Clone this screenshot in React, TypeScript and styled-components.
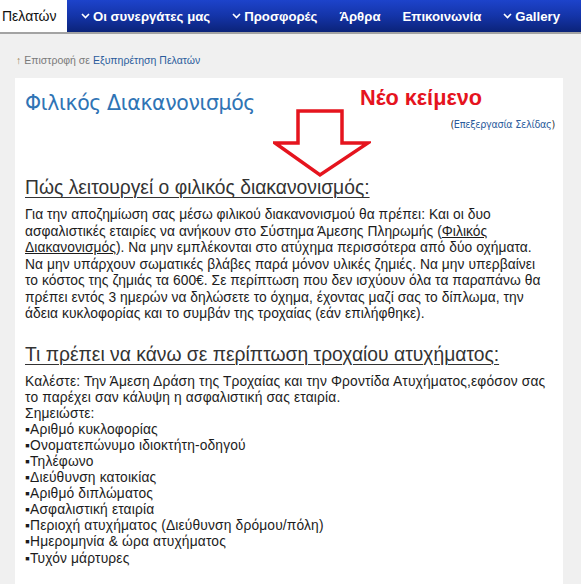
import styled, { createGlobalStyle } from 'styled-components';

const GlobalStyle = createGlobalStyle`
  html, body {
    margin: 0;
    padding: 0;
    background: #f0f0f0;
    font-family: 'Liberation Sans', Arial, sans-serif;
  }
`;

const Page = styled.div`
  width: 581px;
  height: 584px;
  overflow: hidden;
  background: #f0f0f0;
`;

const Nav = styled.nav`
  display: flex;
  align-items: stretch;
  height: 32px;
  background: linear-gradient(to bottom, #1d43cb 0%, #1434a8 50%, #0b2379 100%);
  border-bottom: 2px solid #a3a3a3;
`;

const ActiveTab = styled.div`
  display: flex;
  align-items: center;
  width: 67px;
  padding-left: 2px;
  box-sizing: border-box;
  background: #fff;
  color: #111;
  font-size: 14px;
  white-space: nowrap;
  overflow: hidden;
`;

const Menu = styled.ul`
  display: flex;
  align-items: center;
  gap: 22px;
  margin: 0;
  padding: 0 0 0 14px;
  list-style: none;
`;

const MenuItem = styled.li`
  display: flex;
  align-items: center;
  gap: 3px;
  color: #fff;
  font-size: 13.2px;
  font-weight: bold;
  white-space: nowrap;
`;

const Chevron = () => (
  <svg width="9" height="6" viewBox="0 0 9 6">
    <path d="M1 1 L4.5 4.5 L8 1" fill="none" stroke="#fff" strokeWidth="1.6" />
  </svg>
);

const Main = styled.main`
  padding: 19px 18px 0 15px;
`;

const Breadcrumb = styled.div`
  height: 14px;
  line-height: 14px;
  font-size: 10.5px;
  color: #7a7a7a;
  padding-left: 1px;
`;

const Arrow = styled.span`
  color: #a08a5a;
  margin-right: 3px;
`;

const Link = styled.a`
  color: #2b5c9c;
  text-decoration: none;
`;

const Panel = styled.section`
  position: relative;
  margin-top: 11px;
  background: #fff;
  padding: 12px 4px 40px 10px;
  min-height: 500px;
`;

const Title = styled.h1`
  margin: 0;
  font-size: 20.5px;
  line-height: 26px;
  font-weight: normal;
  color: #2f74b5;
  font-family: 'DejaVu Sans', 'Liberation Sans', sans-serif;
  letter-spacing: -0.4px;
`;

const Note = styled.div`
  position: absolute;
  left: 345px;
  top: 7px;
  font-size: 21.7px;
  line-height: 26px;
  font-weight: bold;
  color: #e5141e;
  font-family: 'Liberation Sans', Arial, sans-serif;
`;

const NoteArrow = styled.svg`
  position: absolute;
  left: 258px;
  top: 31px;
`;

const EditLine = styled.div`
  margin-top: 3px;
  padding-right: 4px;
  text-align: right;
  font-size: 9.7px;
  line-height: 12px;
  color: #333;
  font-family: 'DejaVu Sans', 'Liberation Sans', sans-serif;
  letter-spacing: -0.3px;
`;

const SectionTitle = styled.h2<{ $gap: number }>`
  margin: ${(p) => p.$gap}px 0 0;
  font-size: 19.3px;
  line-height: 24px;
  font-weight: normal;
  color: #333;
  text-decoration: underline;
  text-underline-offset: 3px;
  text-decoration-thickness: 1px;
`;

const Text = styled.p<{ $lh: number; $ls: number }>`
  margin: 7px 0 0;
  font-size: 13.8px;
  letter-spacing: ${(p) => p.$ls}px;
  line-height: ${(p) => p.$lh}px;
  color: #1c1c1c;
`;

const Line = styled.span`
  display: block;
  white-space: nowrap;
`;

const Under = styled.a`
  color: #1c1c1c;
  text-decoration: underline;
`;

const items = [
  'Αριθμό κυκλοφορίας',
  'Ονοματεπώνυμο ιδιοκτήτη-οδηγού',
  'Τηλέφωνο',
  'Διεύθυνση κατοικίας',
  'Αριθμό διπλώματος',
  'Ασφαλιστική εταιρία',
  'Περιοχή ατυχήματος (Διεύθυνση δρόμου/πόλη)',
  'Ημερομηνία & ώρα ατυχήματος',
  'Τυχόν μάρτυρες',
];

export default function App() {
  return (
    <Page>
      <GlobalStyle />
      <Nav>
        <ActiveTab>Πελατών</ActiveTab>
        <Menu>
          <MenuItem>
            <Chevron />
            Οι συνεργάτες μας
          </MenuItem>
          <MenuItem>
            <Chevron />
            Προσφορές
          </MenuItem>
          <MenuItem>Άρθρα</MenuItem>
          <MenuItem>Επικοινωνία</MenuItem>
          <MenuItem>
            <Chevron />
            Gallery
          </MenuItem>
        </Menu>
      </Nav>
      <Main>
        <Breadcrumb>
          <Arrow>↑</Arrow>Επιστροφή σε <Link href="#">Εξυπηρέτηση Πελατών</Link>
        </Breadcrumb>
        <Panel>
          <Title>Φιλικός Διακανονισμός</Title>
          <Note>Νέο κείμενο</Note>
          <NoteArrow width="98" height="70" viewBox="0 0 98 70">
            <polygon
              points="25,2 69,2 69,34 95,34 47,66 2,34 25,34"
              fill="none"
              stroke="#e5141e"
              strokeWidth="3.5"
            />
          </NoteArrow>
          <EditLine>
            (<Link href="#">Επεξεργασία Σελίδας</Link>)
          </EditLine>

          <SectionTitle $gap={45}>Πώς λειτουργεί ο φιλικός διακανονισμός:</SectionTitle>
          <Text $lh={16.5} $ls={0.05}>
            <Line>Για την αποζημίωση σας μέσω φιλικού διακανονισμού θα πρέπει: Και οι δυο</Line>
            <Line>
              ασφαλιστικές εταιρίες να ανήκουν στο Σύστημα Άμεσης Πληρωμής (<Under href="#">Φιλικός</Under>
            </Line>
            <Line>
              <Under href="#">Διακανονισμός</Under>). Να μην εμπλέκονται στο ατύχημα περισσότερα από δύο οχήματα.
            </Line>
            <Line>Να μην υπάρχουν σωματικές βλάβες παρά μόνον υλικές ζημιές. Να μην υπερβαίνει</Line>
            <Line>το κόστος της ζημιάς τα 600€. Σε περίπτωση που δεν ισχύουν όλα τα παραπάνω θα</Line>
            <Line>πρέπει εντός 3 ημερών να δηλώσετε το όχημα, έχοντας μαζί σας το δίπλωμα, την</Line>
            <Line>άδεια κυκλοφορίας και το συμβάν της τροχαίας (εάν επιλήφθηκε).</Line>
          </Text>

          <SectionTitle $gap={20}>Τι πρέπει να κάνω σε περίπτωση τροχαίου ατυχήματος:</SectionTitle>
          <Text $lh={16.1} $ls={0.15}>
            Καλέστε: Την Άμεση Δράση της Τροχαίας και την Φροντίδα Ατυχήματος,εφόσον σας το παρέχει
            σαν κάλυψη η ασφαλιστική σας εταιρία.
            <br />
            Σημειώστε:
            {items.map((it) => (
              <span key={it}>
                <br />▪{it}
              </span>
            ))}
          </Text>
        </Panel>
      </Main>
    </Page>
  );
}
